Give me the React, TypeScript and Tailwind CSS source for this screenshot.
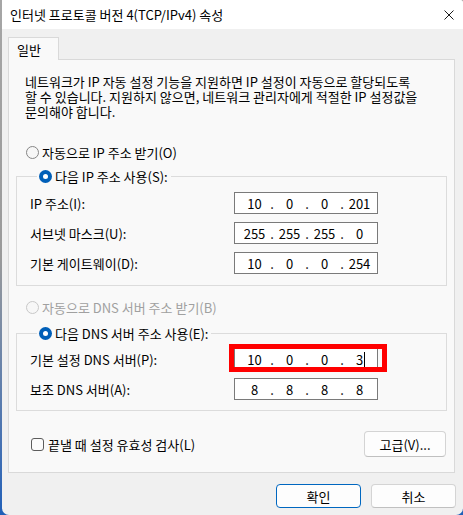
import React, { Fragment } from "react";

const FONT = "[font-family:'Noto_Sans_CJK_KR',sans-serif]";
const T = "text-[13px] leading-[15px]";

function Radio({ checked, disabled }: { checked?: boolean; disabled?: boolean }) {
  if (checked)
    return (
      <span className="w-[13px] h-[13px] shrink-0 rounded-full bg-[#005fb8] flex items-center justify-center">
        <span className="w-[5px] h-[5px] rounded-full bg-white" />
      </span>
    );
  return (
    <span
      className={
        disabled
          ? "w-[13px] h-[13px] shrink-0 rounded-full border border-[#c8c8c8] bg-[#f7f7f7]"
          : "w-[13px] h-[13px] shrink-0 rounded-full border border-[#868686] bg-[#f7f7f7]"
      }
    />
  );
}

function IpField({ parts, cursor }: { parts: string[]; cursor?: boolean }) {
  return (
    <div className={`h-[22px] w-[144px] border border-[#7a7a7a] bg-white flex items-center pl-[5px] ${T} text-black`}>
      {parts.map((p, i) => (
        <Fragment key={i}>
          <span className="w-[29px] flex justify-center">
            <span className="relative">
              {p}
              {cursor && i === 3 && (
                <span className="absolute right-[-2px] top-[0px] w-px h-[15px] bg-black" />
              )}
            </span>
          </span>
          {i < 3 && <span className="w-[6px] text-center">.</span>}
        </Fragment>
      ))}
    </div>
  );
}

function Row({ label, children }: { label: string; children: React.ReactNode }) {
  return (
    <div className="flex items-center h-[22px]">
      <span className={`w-[204px] ${T} text-black`}>{label}</span>
      {children}
    </div>
  );
}

export default function App() {
  return (
    <div className={`w-[463px] h-[515px] flex bg-linear-to-b from-[#a6a6a6] via-[#9a9a9a] to-[#1f5fb8] ${FONT}`}>
      <div className="ml-[2px] w-[461px] h-[515px] flex flex-col rounded-bl-[7px] rounded-br-[7px] rounded-tr-[3px] overflow-hidden bg-[#f0f0f0]">
        {/* Title bar */}
        <div className="h-[29px] bg-white flex items-center justify-between pl-[8px] pr-[9px] shrink-0">
          <span className={`${T} text-black`}>인터넷 프로토콜 버전 4(TCP/IPv4) 속성</span>
          <svg width="10" height="10" viewBox="0 0 10 10" className="shrink-0">
            <path d="M0.5 0.5 L9.5 9.5 M9.5 0.5 L0.5 9.5" stroke="#1a1a1a" strokeWidth="1" fill="none" />
          </svg>
        </div>

        {/* Body */}
        <div className="flex flex-col flex-1">
          {/* Tab */}
          <div className="pt-[8px] pl-[6px]">
            <div className={`relative z-10 -mb-px w-[51px] h-[23px] border border-b-0 border-[#d9d9d9] bg-[#f9f9f9] flex items-center pl-[8px] ${T} text-black`}>
              일반
            </div>
          </div>

          {/* Panel */}
          <div className="ml-[6px] w-[447px] h-[414px] border border-[#d9d9d9] bg-[#f9f9f9] px-[7px] flex flex-col">
            <p className={`ml-[9px] pt-[14px] ${T} text-black whitespace-nowrap`}>
              네트워크가 IP 자동 설정 기능을 지원하면 IP 설정이 자동으로 할당되도록
              <br />
              할 수 있습니다. 지원하지 않으면, 네트워크 관리자에게 적절한 IP 설정값을
              <br />
              문의해야 합니다.
            </p>

            <div className={`mt-[25px] ml-[10px] h-[16px] flex items-center gap-[3px] ${T} text-black`}>
              <Radio />
              <span>자동으로 IP 주소 받기(O)</span>
            </div>

            <fieldset className="mt-[8px] w-[431px] border border-[#dcdcdc] pl-[13px] pt-[8px] pb-[11px] flex flex-col gap-[8px]">
              <legend className={`ml-[7px] pl-[2px] pr-[3px] h-[16px] flex items-center gap-[3px] ${T} text-black`}>
                <Radio checked />
                <span>다음 IP 주소 사용(S):</span>
              </legend>
              <Row label="IP 주소(I):">
                <IpField parts={["10", "0", "0", "201"]} />
              </Row>
              <Row label="서브넷 마스크(U):">
                <IpField parts={["255", "255", "255", "0"]} />
              </Row>
              <Row label="기본 게이트웨이(D):">
                <IpField parts={["10", "0", "0", "254"]} />
              </Row>
            </fieldset>

            <div className={`mt-[13px] ml-[10px] h-[16px] flex items-center gap-[3px] ${T} text-[#a0a0a0]`}>
              <Radio disabled />
              <span>자동으로 DNS 서버 주소 받기(B)</span>
            </div>

            <fieldset className="mt-[10px] w-[431px] border border-[#dcdcdc] pl-[13px] pt-[7px] pb-[10px] flex flex-col gap-[8px]">
              <legend className={`ml-[7px] pl-[2px] pr-[3px] h-[16px] flex items-center gap-[3px] ${T} text-black`}>
                <Radio checked />
                <span>다음 DNS 서버 주소 사용(E):</span>
              </legend>
              <Row label="기본 설정 DNS 서버(P):">
                <div className="relative">
                  <IpField parts={["10", "0", "0", "3"]} cursor />
                  <div className="absolute left-[-5px] top-[-4px] w-[158px] h-[28px] border-[5px] border-[#ff0000]" />
                </div>
              </Row>
              <Row label="보조 DNS 서버(A):">
                <IpField parts={["8", "8", "8", "8"]} />
              </Row>
            </fieldset>

            <div className="mt-[20px] flex items-center justify-between pr-[1px]">
              <div className={`ml-[15px] flex items-center gap-[4px] ${T} text-black`}>
                <span className="w-[13px] h-[13px] rounded-[3px] border border-[#5c5c5c] bg-[#fbfbfb]" />
                <span>끝낼 때 설정 유효성 검사(L)</span>
              </div>
              <button className={`w-[82px] h-[26px] rounded-[4px] border border-[#d4d4d4] border-b-[#c0c0c0] bg-[#fdfdfd] ${T} text-black`}>
                고급(V)...
              </button>
            </div>
          </div>

          {/* Bottom buttons */}
          <div className="mt-[11px] flex justify-end gap-[10px] pr-[7px]">
            <button className={`w-[85px] h-[24px] rounded-[4px] border border-[#0067c0] bg-[#fdfdfd] ${T} text-black`}>
              확인
            </button>
            <button className={`w-[85px] h-[24px] rounded-[4px] border border-[#d4d4d4] border-b-[#c0c0c0] bg-[#fdfdfd] ${T} text-black`}>
              취소
            </button>
          </div>
        </div>
      </div>
    </div>
  );
}
